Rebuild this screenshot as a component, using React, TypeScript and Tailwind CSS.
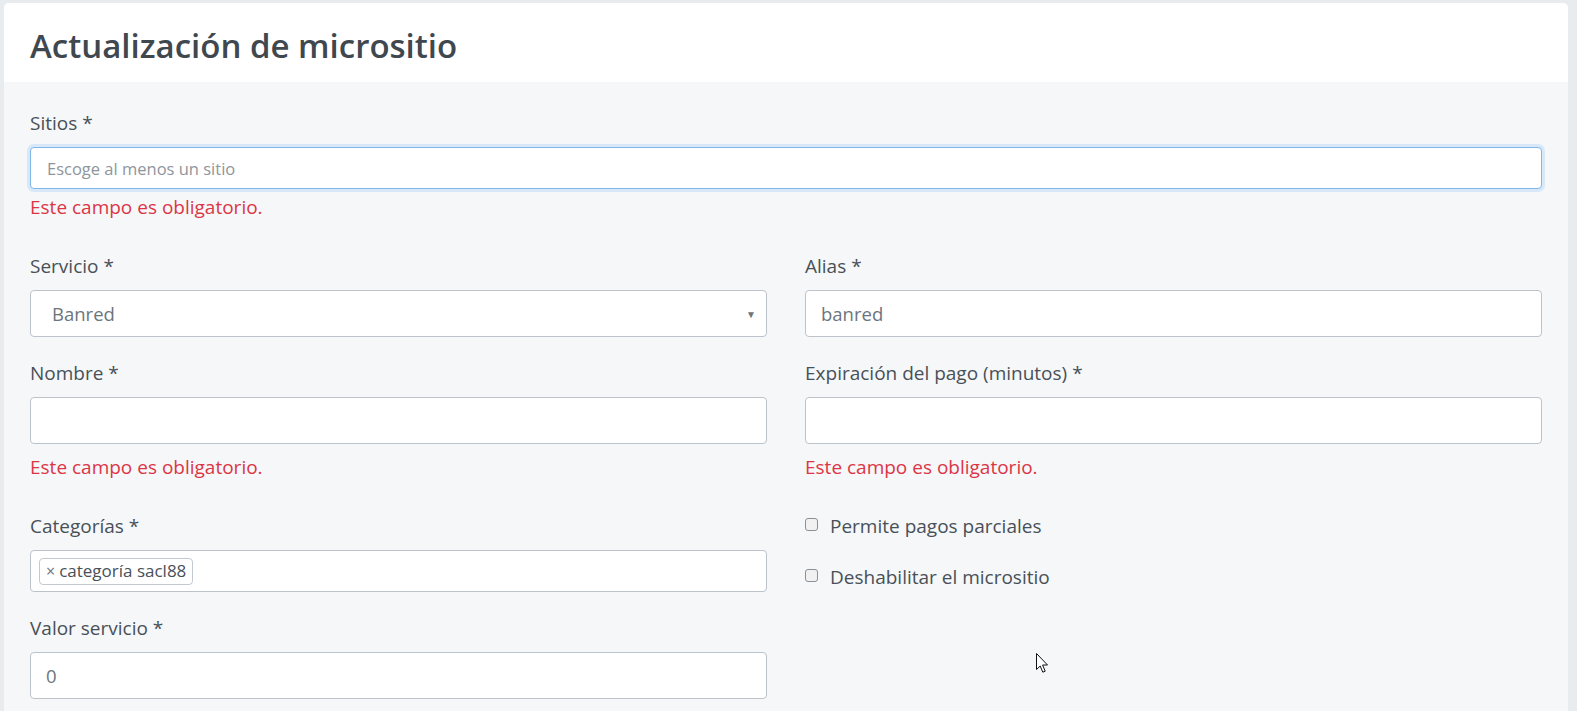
const Field = ({
  label,
  children,
  error,
  errorClass = "mt-[6px]",
  className = "",
}: {
  label: string;
  children: React.ReactNode;
  error?: boolean;
  errorClass?: string;
  className?: string;
}) => (
  <div className={className}>
    <label className="block text-[19px] leading-6 text-[#495057]">{label}</label>
    <div className="mt-3">{children}</div>
    {error && (
      <p className={`${errorClass} text-[19px] leading-6 text-[#dc3545]`}>Este campo es obligatorio.</p>
    )}
  </div>
);

const inputCls =
  "w-full h-[47px] rounded-[4px] border border-[#bdc3ca] bg-white px-[15px] pt-[1px] text-[18.5px] text-[#6c757d] flex items-center";

const Cursor = () => (
  <svg className="absolute left-[1036px] top-[653px]" width="13" height="21" viewBox="0 0 13 21">
    <path d="M0.5 0.5 L0.5 16.5 L4.2 13 L6.8 19.2 L9.2 18.2 L6.6 12 L11.5 12 Z" fill="#fff" stroke="#111" strokeWidth="1" strokeLinejoin="round" />
  </svg>
);

const App = () => {
  return (
    <div
      className="relative w-full h-[711px] overflow-hidden bg-[#e9ecef] pl-[4px] pr-[9px] pt-[3px]"
      style={{ fontFamily: '"Open Sans", "Noto Sans", sans-serif' }}
    >
      <div className="h-full rounded-t-[5px] overflow-hidden bg-[#f5f7f9]">
        <div className="h-[79px] bg-white px-[26px] flex items-center">
          <h1 className="text-[33px] font-semibold text-[#3f474f] leading-none pt-[5px]">Actualización de micrositio</h1>
        </div>

        <div className="px-[26px] pt-[29px]">
          <Field label="Sitios *" error>
            <div className="w-full h-[42px] rounded-[4px] border border-[#7fb7ea] bg-white px-[16px] pt-[3px] flex items-center text-[16.5px] text-[#8e959c] shadow-[0_0_0_3px_rgba(0,123,255,0.12)]">
              Escoge al menos un sitio
            </div>
          </Field>

          <div className="grid grid-cols-2 gap-x-[38px] mt-[35px]">
            <div className="flex flex-col">
              <Field label="Servicio *">
                <div className={`${inputCls} justify-between pl-[21px] pr-[10px]`}>
                  <span>Banred</span>
                  <span className="text-[10px] text-[#6c757d]">▼</span>
                </div>
              </Field>
              <Field label="Nombre *" error errorClass="mt-[11px]" className="mt-6">
                <div className={inputCls} />
              </Field>
              <Field label="Categorías *" className="mt-[35px]">
                <div className="w-full h-[42px] rounded-[4px] border border-[#bdc3ca] bg-white px-[8px] flex items-center">
                  <span className="h-[27px] rounded-[4px] border border-[#c4c9cf] bg-white px-[6px] flex items-center gap-[4px] text-[17px] text-[#495057]">
                    <span className="text-[#6c757d] text-[16px]">×</span>
                    categoría sacl88
                  </span>
                </div>
              </Field>
              <Field label="Valor servicio *" className="mt-6">
                <div className={inputCls}>0</div>
              </Field>
            </div>

            <div className="flex flex-col">
              <Field label="Alias *">
                <div className={inputCls}>banred</div>
              </Field>
              <Field label="Expiración del pago (minutos) *" error errorClass="mt-[11px]" className="mt-6">
                <div className={inputCls} />
              </Field>
              <div className="mt-[35px] flex flex-col gap-[27px]">
                <label className="flex items-center gap-[12px] text-[19px] leading-6 text-[#495057]">
                  <span className="w-[13px] h-[13px] rounded-[3px] border border-[#8a9097] bg-[#f1f1f1] -mt-[4px]" />
                  Permite pagos parciales
                </label>
                <label className="flex items-center gap-[12px] text-[19px] leading-6 text-[#495057]">
                  <span className="w-[13px] h-[13px] rounded-[3px] border border-[#8a9097] bg-[#f1f1f1] -mt-[4px]" />
                  Deshabilitar el micrositio
                </label>
              </div>
            </div>
          </div>
        </div>
      </div>
      <Cursor />
    </div>
  );
};

export default App;
